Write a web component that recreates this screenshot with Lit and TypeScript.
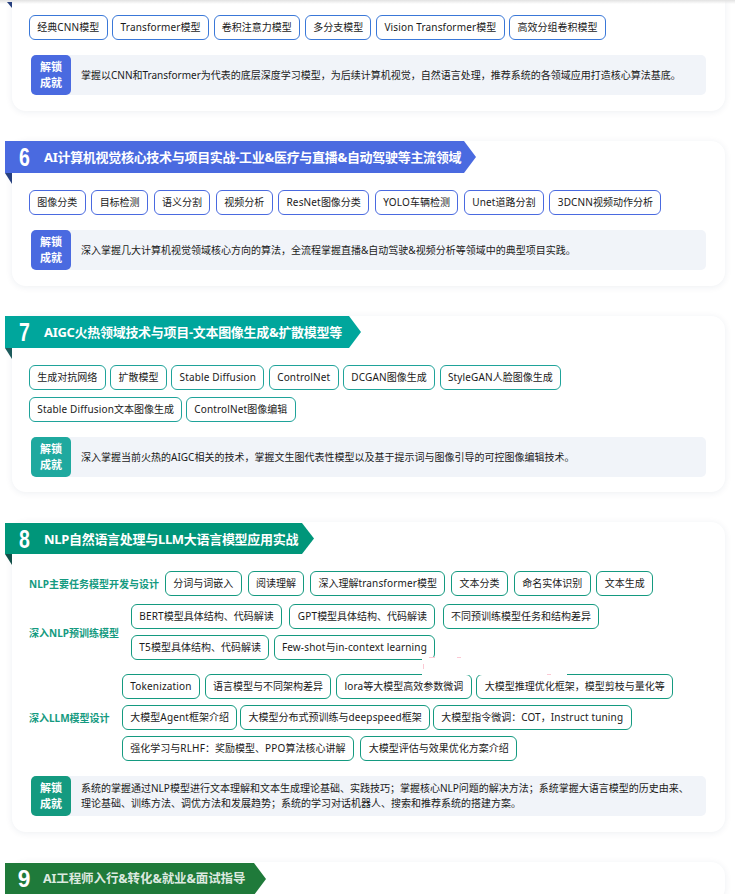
import { LitElement, html, css } from "lit";
import { customElement } from "lit/decorators.js";

type Row = { gap: number; tags: string[] };
type Group = { label: string; labelW: number; rows: Row[] };
type Section = {
  num: string; title: string; color: string; dark: string; badge: string; tag: string;
  ribbon: number; tags?: Row[]; groups?: Group[]; text: string[]; cls: string;
};

const sections: Section[] = [
  {
    num: "6", title: "AI计算机视觉核心技术与项目实战-工业&医疗与直播&自动驾驶等主流领域", cls: "s6",
    color: "#4a6ae0", dark: "#27407f", badge: "#4a6ae0", tag: "#4a6ae0", ribbon: 471,
    tags: [{ gap: 5.6, tags: ["图像分类", "目标检测", "语义分割", "视频分析", "ResNet图像分类", "YOLO车辆检测", "Unet道路分割", "3DCNN视频动作分析"] }],
    text: ["深入掌握几大计算机视觉领域核心方向的算法，全流程掌握直播&自动驾驶&视频分析等领域中的典型项目实践。"],
  },
  {
    num: "7", title: "AIGC火热领域技术与项目-文本图像生成&扩散模型等", cls: "s7",
    color: "#00a69c", dark: "#1d5b5c", badge: "#1fa99f", tag: "#1fa39a", ribbon: 356,
    tags: [
      { gap: 4.4, tags: ["生成对抗网络", "扩散模型", "Stable Diffusion", "ControlNet", "DCGAN图像生成", "StyleGAN人脸图像生成"] },
      { gap: 3.6, tags: ["Stable Diffusion文本图像生成", "ControlNet图像编辑"] },
    ],
    text: ["深入掌握当前火热的AIGC相关的技术，掌握文生图代表性模型以及基于提示词与图像引导的可控图像编辑技术。"],
  },
  {
    num: "8", title: "NLP自然语言处理与LLM大语言模型应用实战", cls: "s8",
    color: "#00967a", dark: "#124f48", badge: "#149a80", tag: "#149a80", ribbon: 309,
    groups: [
      { label: "NLP主要任务模型开发与设计", labelW: 136, rows: [{ gap: 5.9, tags: ["分词与词嵌入", "阅读理解", "深入理解transformer模型", "文本分类", "命名实体识别", "文本生成"] }] },
      { label: "深入NLP预训练模型", labelW: 102, rows: [
        { gap: 7.3, tags: ["BERT模型具体结构、代码解读", "GPT模型具体结构、代码解读", "不同预训练模型任务和结构差异"] },
        { gap: 4.3, tags: ["T5模型具体结构、代码解读", "Few-shot与in-context learning"] },
      ] },
      { label: "深入LLM模型设计", labelW: 93, rows: [
        { gap: 4.8, tags: ["Tokenization", "语言模型与不同架构差异", "lora等大模型高效参数微调", "大模型推理优化框架，模型剪枝与量化等"] },
        { gap: 2.7, tags: ["大模型Agent框架介绍", "大模型分布式预训练与deepspeed框架", "大模型指令微调：COT，Instruct tuning"] },
        { gap: 6.7, tags: ["强化学习与RLHF：奖励模型、PPO算法核心讲解", "大模型评估与效果优化方案介绍"] },
      ] },
    ],
    text: ["系统的掌握通过NLP模型进行文本理解和文本生成理论基础、实践技巧；掌握核心NLP问题的解决方法；系统掌握大语言模型的历史由来、", "理论基础、训练方法、调优方法和发展趋势；系统的学习对话机器人、搜索和推荐系统的搭建方案。"],
  },
];

const parts = (t: string) => t.split(/([A-Za-z0-9\- ]+)/).filter(Boolean);

@customElement("app-root")
export class AppRoot extends LitElement {
  static styles = css`
    :host { display: block; position: relative; height: 894px; overflow: hidden; background: #fff;
      font-family: "Noto Sans", "Noto Sans CJK SC", sans-serif; color: #1a1a1a; }
    .page { margin-top: -30px; display: flex; flex-direction: column; gap: 30px; padding: 0 10px 0 12px; }
    .card { background: #fff; border-radius: 14px; box-shadow: 0 1px 7px rgba(30, 50, 90, 0.08); position: relative; }
    .first { padding: 45px 19px 16px 17px; }
    .ribbon { position: relative; margin-left: -7px; height: 32px; display: flex; align-items: center; color: #fff;
      clip-path: polygon(0 0, calc(100% - 12px) 0, 100% 50%, calc(100% - 12px) 100%, 0 100%); }
    .num { width: 39px; flex: none; text-align: center; font: 700 26px/32px "Liberation Sans", sans-serif; transform: scaleX(0.75); }
    .title { font-size: 13px; font-weight: 700; line-height: 32px; letter-spacing: -0.3px; white-space: nowrap; }
    .tail { width: 7px; height: 11px; margin-left: -7px; clip-path: polygon(0 0, 100% 0, 100% 100%); }
    .body { margin-top: -11px; padding: 17px 19px 16px 17px; }
    .s7 .body { padding-bottom: 15px; }
    .s8 .ribbon { margin-top: 1px; height: 31px; }
    .tagrow { display: flex; }
    .tags { display: flex; flex-direction: column; gap: 7px; }
    .tag { height: 25px; box-sizing: border-box; border: 1px solid; border-radius: 6px; padding: 0 7.35px; font-size: 10px; line-height: 23px; white-space: nowrap; background: #fff; }
    .lat { letter-spacing: 0.15px; }
    .outcome { margin: 15px 0 0 2px; height: 40px; display: flex; background: #f1f4f9; border-radius: 5px; align-items: center; }
    .badge { width: 40px; height: 40px; flex: none; border-radius: 5px; color: #fff; font-size: 11px; font-weight: 700; line-height: 16px; display: flex; flex-direction: column; align-items: center; justify-content: center; }
    .text { padding-left: 10px; font-size: 10px; line-height: 15px; white-space: nowrap; }
    .groups { display: flex; flex-direction: column; gap: 8px; }
    .group { display: flex; align-items: center; }
    .label { font-size: 10px; font-weight: 700; flex: none; white-space: nowrap; }
    .group:nth-child(3) { margin-top: 6px; }
    .group .tags { gap: 6px; }
    .end { height: 40px; }
    .end .ribbon { margin-top: 1px; }
    .end .num { width: 38px; font-size: 24px; transform: scaleX(0.95); }
    .end .title { font-size: 12.5px; color: rgba(255, 255, 255, 0.85); letter-spacing: -0.1px; }
    .scrollshade { position: absolute; left: 0; right: 0; top: 0; height: 4px; background: linear-gradient(#e2e2e2, rgba(255, 255, 255, 0)); }
    .tail0 { position: absolute; left: 7px; top: 2px; width: 5px; height: 6px; background: #27407f; clip-path: polygon(0 0, 100% 0, 100% 100%); }
    .patch { position: absolute; left: 422px; top: 657px; width: 145px; height: 18px; background: #fff; }
    .dash { position: absolute; background: #fbc9d4; }
    .d1 { left: 7px; top: 0; width: 6px; height: 1px; }
    .d2 { left: 35px; top: 0; width: 4px; height: 1px; }
    .d3 { left: 1px; top: 7px; width: 1px; height: 5px; }
    .d4 { left: 125px; top: 17px; width: 4px; height: 1px; }
  `;

  tag(t: string, c: string) {
    return html`<span class="tag" style="border-color:${c}">${parts(t).map((p) =>
      /[A-Za-z]/.test(p) ? html`<span class="lat">${p}</span>` : p
    )}</span>`;
  }

  row(r: Row, c: string) {
    return html`<div class="tagrow" style="gap:${r.gap}px">${r.tags.map((t) => this.tag(t, c))}</div>`;
  }

  outcome(badge: string, lines: string[]) {
    return html`<div class="outcome">
      <div class="badge" style="background:${badge}"><span>解锁</span><span>成就</span></div>
      <div class="text">${lines.map((l) => html`<div>${l}</div>`)}</div>
    </div>`;
  }

  head(s: { color: string; ribbon: number; num: string; title: string }) {
    return html`<div class="ribbon" style="background:${s.color};width:${s.ribbon}px">
      <div class="num">${s.num}</div><div class="title">${s.title}</div>
    </div>`;
  }

  render() {
    const blue = "#3a78d8";
    return html`<div class="page">
      <div class="card first">
        ${this.row({ gap: 4.6, tags: ["经典CNN模型", "Transformer模型", "卷积注意力模型", "多分支模型", "Vision Transformer模型", "高效分组卷积模型"] }, blue)}
        ${this.outcome("#4a6ae0", ["掌握以CNN和Transformer为代表的底层深度学习模型，为后续计算机视觉，自然语言处理，推荐系统的各领域应用打造核心算法基底。"])}
      </div>
      ${sections.map((s) => html`<div class="card ${s.cls}">
        ${this.head(s)}
        <div class="tail" style="background:${s.dark}"></div>
        <div class="body">
          ${s.tags ? html`<div class="tags">${s.tags.map((r) => this.row(r, s.tag))}</div>` : ""}
          ${s.groups ? html`<div class="groups">${s.groups.map((g) => html`<div class="group">
            <div class="label" style="color:${s.tag};width:${g.labelW}px">${g.label}</div>
            <div class="tags">${g.rows.map((r) => this.row(r, s.tag))}</div>
          </div>`)}</div>` : ""}
          ${this.outcome(s.badge, s.text)}
        </div>
      </div>`)}
      <div class="card end">
        ${this.head({ num: "9", title: "AI工程师入行&转化&就业&面试指导", color: "#1f7a3a", ribbon: 261 })}
      </div>
    </div>
    <div class="scrollshade"></div>
    <div class="tail0"></div>
    <div class="patch">
      <span class="dash d1"></span><span class="dash d2"></span><span class="dash d3"></span><span class="dash d4"></span>
    </div>`;
  }
}
